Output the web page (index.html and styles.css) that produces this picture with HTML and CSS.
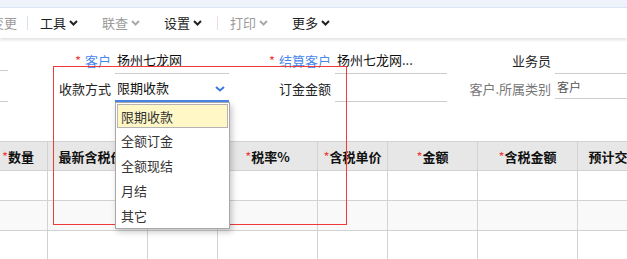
FILE: index.html
```html
<!DOCTYPE html>
<html>
<head>
<meta charset="UTF-8">
<title>收款单</title>
<link rel="stylesheet" href="styles.css">
</head>
<body>
<div class="topstrip"></div>
<div class="toolbar">
	<span class="tb first dis">变更</span>
	<span class="sep"></span>
	<span class="tb">工具<svg class="chev" width="9" height="6" viewBox="0 0 9 6"><polyline points="1,1 4.5,4.5 8,1"/></svg></span>
	<span class="tb dis">联查<svg class="chev" width="9" height="6" viewBox="0 0 9 6"><polyline points="1,1 4.5,4.5 8,1"/></svg></span>
	<span class="tb">设置<svg class="chev" width="9" height="6" viewBox="0 0 9 6"><polyline points="1,1 4.5,4.5 8,1"/></svg></span>
	<span class="sep pink"></span>
	<span class="tb dis">打印<svg class="chev" width="9" height="6" viewBox="0 0 9 6"><polyline points="1,1 4.5,4.5 8,1"/></svg></span>
	<span class="tb">更多<svg class="chev" width="9" height="6" viewBox="0 0 9 6"><polyline points="1,1 4.5,4.5 8,1"/></svg></span>
</div>

<div class="form">
	<div class="stub"></div>
	<label class="lbl link"><i class="req">*</i> 客户</label>
	<div class="fld">扬州七龙网</div>
	<label class="lbl link"><i class="req">*</i> 结算客户</label>
	<div class="fld">扬州七龙网...</div>
	<label class="lbl">业务员</label>
	<div class="fld"></div>

	<div class="stub low"></div>
	<label class="lbl">收款方式</label>
	<div class="fld sel">限期收款
		<svg class="selchev" width="10" height="6" viewBox="0 0 10 6"><polyline points="1,1 5,4.5 9,1"/></svg>
		<ul class="dropdown">
			<li class="on">限期收款</li>
			<li>全额订金</li>
			<li>全额现结</li>
			<li>月结</li>
			<li>其它</li>
		</ul>
	</div>
	<label class="lbl">订金金额</label>
	<div class="fld"></div>
	<label class="lbl grey">客户.所属类别</label>
	<div class="fld small">客户</div>
</div>

<table class="grid">
	<colgroup>
		<col style="width:59px"><col style="width:100px"><col style="width:70px"><col style="width:100px">
		<col style="width:70px"><col style="width:90px"><col style="width:100px"><col style="width:100px">
	</colgroup>
	<tr class="head">
		<th><i class="req">*</i>数量</th>
		<th>最新含税价格</th>
		<th></th>
		<th><i class="req">*</i>税率%</th>
		<th><i class="req">*</i>含税单价</th>
		<th><i class="req">*</i>金额</th>
		<th><i class="req">*</i>含税金额</th>
		<th>预计交货日期</th>
	</tr>
	<tr><td></td><td></td><td></td><td></td><td></td><td></td><td></td><td></td></tr>
	<tr class="alt"><td></td><td></td><td></td><td></td><td></td><td></td><td></td><td></td></tr>
	<tr><td></td><td></td><td></td><td></td><td></td><td></td><td></td><td></td></tr>
</table>

<div class="mark"></div>
</body>
</html>
```

FILE: styles.css
```css
html, body {margin:0; padding:0; overflow:hidden;}
body {font-family:"Noto Sans CJK SC", "Noto Sans", sans-serif; font-size:13px; color:#222; background:#fff; position:relative; height:259px;}
i.req {font-style:normal; font-weight:normal; color:#f23b3b;}

.topstrip {height:8px; background:#eef3fc; border-bottom:1px solid #dce5f3; box-sizing:border-box;}

.toolbar {height:30px; display:flex; align-items:center; background:#fff; box-shadow:0 2px 3px rgba(0,0,0,.12); position:relative; z-index:1;}
.tb {display:flex; align-items:center; padding:0 12px; color:#222; white-space:nowrap; line-height:30px;}
.tb.first {margin-left:-21px; padding-right:7px;}
.tb.dis {color:#9a9a9a;}
.chev {margin-left:3px; fill:none; stroke:#222; stroke-width:2;}
.tb.dis .chev {stroke:#aaa;}
.sep {width:1px; height:14px; margin-left:3px; background:#d9e1ec;}
.sep.pink {background:#eddcdc;}

.form {display:grid; grid-template-columns:8px 107px 114px 106px 112px 108px 1fr; grid-auto-rows:28px; padding-top:8px;}
.stub {border-bottom:1px solid #ccc; margin-bottom:3px;}
.stub.low {margin-bottom:0;}
.lbl {display:flex; align-items:center; justify-content:flex-end; padding-right:4px; white-space:nowrap; color:#222;}
.lbl.link {color:#4a88ec;}
.lbl.grey {color:#777;}
.lbl .req {margin-right:4px;}
.fld {display:flex; align-items:center; padding-left:2px; border-bottom:1px solid #ccc; white-space:nowrap; color:#111;}
.fld.small {font-size:12px; color:#555; margin-bottom:3px;}
.fld.sel {position:relative; border-bottom:2px solid #4a86e8;}
.selchev {position:absolute; right:4px; top:12px; fill:none; stroke:#3a7ae0; stroke-width:2;}

.dropdown {position:absolute; left:0; top:28px; width:115px; margin:0; padding:1px 1px 0; list-style:none; background:#fff; border:1px solid #a8a8a8; box-sizing:border-box; box-shadow:2px 3px 6px rgba(0,0,0,.22); z-index:5;}
.dropdown li {height:25px; line-height:25px; padding-left:4px; color:#333;}
.dropdown li.on {background:#fff8c6; border:1px solid #b4b4b4; line-height:23px; height:24px; padding-left:3px; box-sizing:border-box;}

.grid {margin:39px 0 0 -12px; border-collapse:collapse; table-layout:fixed; width:689px;}
.grid th, .grid td {border:1px solid #d2d2d2; padding:0; white-space:nowrap; overflow:hidden;}
.grid th {height:28px; background:#e7e7e7; font-weight:bold; color:#111; text-align:center;}
.grid td {height:29px;}
.grid tr.alt td {background:#f9f9f9;}

.mark {position:absolute; left:53px; top:66px; width:294px; height:159px; border:1px solid #f03a3a; box-sizing:border-box; z-index:3; pointer-events:none;}
```
